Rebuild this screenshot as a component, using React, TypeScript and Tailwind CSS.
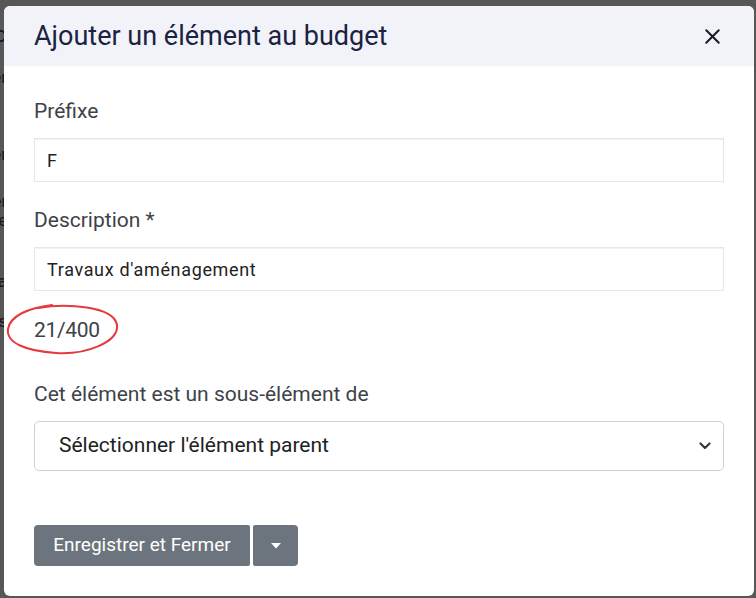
import { X } from 'lucide-react'

const font = { fontFamily: 'Roboto, "Liberation Sans", sans-serif' }

// bits of the page behind the backdrop, only their right edges peek out
const behind = [
  { t: 'Budgeto', top: 'mt-[24px]', c: 'text-[#0b1230] text-[22px] leading-[22px]' },
  { t: 'Filtrer', top: 'mt-[23px]', c: 'text-[#161616] text-[17px] leading-[17px]' },
  { t: 'Trier', top: 'mt-[60px]', c: 'text-[#161616] text-[17px] leading-[17px]' },
  { t: 'Afficher', top: 'mt-[31px]', c: 'text-[#161616] text-[16px] leading-[16px]' },
  { t: 'Ajoutée', top: 'mt-[3px]', c: 'text-[#161616] text-[16px] leading-[16px]' },
  { t: 'Catégoria', top: 'mt-[44px]', c: 'text-[#161616] text-[17px] leading-[17px]' },
  { t: 'Comptes', top: 'mt-[23px]', c: 'text-[#161616] text-[17px] leading-[17px]' },
]

export default function App() {
  return (
    <div className="relative w-[756px] h-[598px] bg-[#575757] overflow-hidden" style={font}>
      <div className="flex flex-col items-end w-[7px]">
        {behind.map((b, i) => (
          <div key={i} className={`${b.top} ${b.c} whitespace-nowrap`}>
            {b.t}
          </div>
        ))}
      </div>

      <div className="absolute left-[4px] top-[6px] w-[750px] h-[590px] bg-white rounded-[6px] overflow-hidden">
        {/* header */}
        <div className="h-[60px] bg-[#f1f3f8] flex items-center justify-between pl-[30px] pr-[29px]">
          <h2 className="text-[27px] text-[#1b2243]">Ajouter un élément au budget</h2>
          <X className="w-[25px] h-[25px] text-[#151b26]" strokeWidth={1.9} />
        </div>

        {/* body */}
        <div className="px-[30px] pt-[32px] flex flex-col">
          <label className="text-[21px] leading-[27px] text-[#3d4249]">Préfixe</label>
          <div className="mt-[13px] h-[44px] border border-[#e7e7e7] shadow-[inset_0_1px_1px_rgba(0,0,0,0.06)] flex items-center pl-[12px] text-[18px] text-[#222]">
            F
          </div>

          <label className="mt-[25px] text-[21px] leading-[27px] text-[#3d4249]">Description *</label>
          <div className="mt-[13px] h-[44px] border border-[#e7e7e7] shadow-[inset_0_1px_1px_rgba(0,0,0,0.06)] flex items-center pl-[12px] text-[18px] text-[#222] tracking-[0.65px]">
            Travaux d'aménagement
          </div>

          <div className="mt-[26px] text-[21px] leading-[27px] text-[#3d4249] tracking-[-0.3px]">21/400</div>

          <label className="mt-[37px] text-[21px] leading-[27px] text-[#3d4249]">
            Cet élément est un sous-élément de
          </label>
          <div className="mt-[13px] h-[50px] border border-[#cfd3d7] rounded-[5px] flex items-center justify-between pl-[24px] pr-[12px] text-[21px] text-[#222]">
            <span>Sélectionner l'élément parent</span>
            <svg width="12" height="8" viewBox="0 0 12 8" fill="none">
              <path d="M1.5 1.5 L6 6 L10.5 1.5" stroke="#343a40" strokeWidth="2.2" strokeLinecap="round" strokeLinejoin="round" />
            </svg>
          </div>

          <div className="mt-[54px] flex gap-[3px]">
            <button className="h-[41px] w-[216px] bg-[#6c757d] text-white text-[19px] rounded-l-[4px] rounded-r-[2px]">
              Enregistrer et Fermer
            </button>
            <button className="h-[41px] w-[45px] bg-[#6c757d] rounded-r-[4px] rounded-l-[2px] flex items-center justify-center">
              <svg width="10" height="6" viewBox="0 0 10 6">
                <path d="M0 0 L10 0 L5 5.5 Z" fill="white" />
              </svg>
            </button>
          </div>
        </div>

        {/* hand-drawn red ring round the counter */}
        <svg className="absolute left-0 top-[292px]" width="124" height="66" viewBox="0 0 124 66" fill="none">
          <path
            d="M34 10 C 62 5, 110 8, 113 27 C 115 44, 82 57, 52 55 C 22 53, 2 45, 4 31 C 6 18, 24 10, 48 7"
            stroke="#e43a3f"
            strokeWidth="2"
            strokeLinecap="round"
          />
        </svg>
      </div>
    </div>
  )
}
